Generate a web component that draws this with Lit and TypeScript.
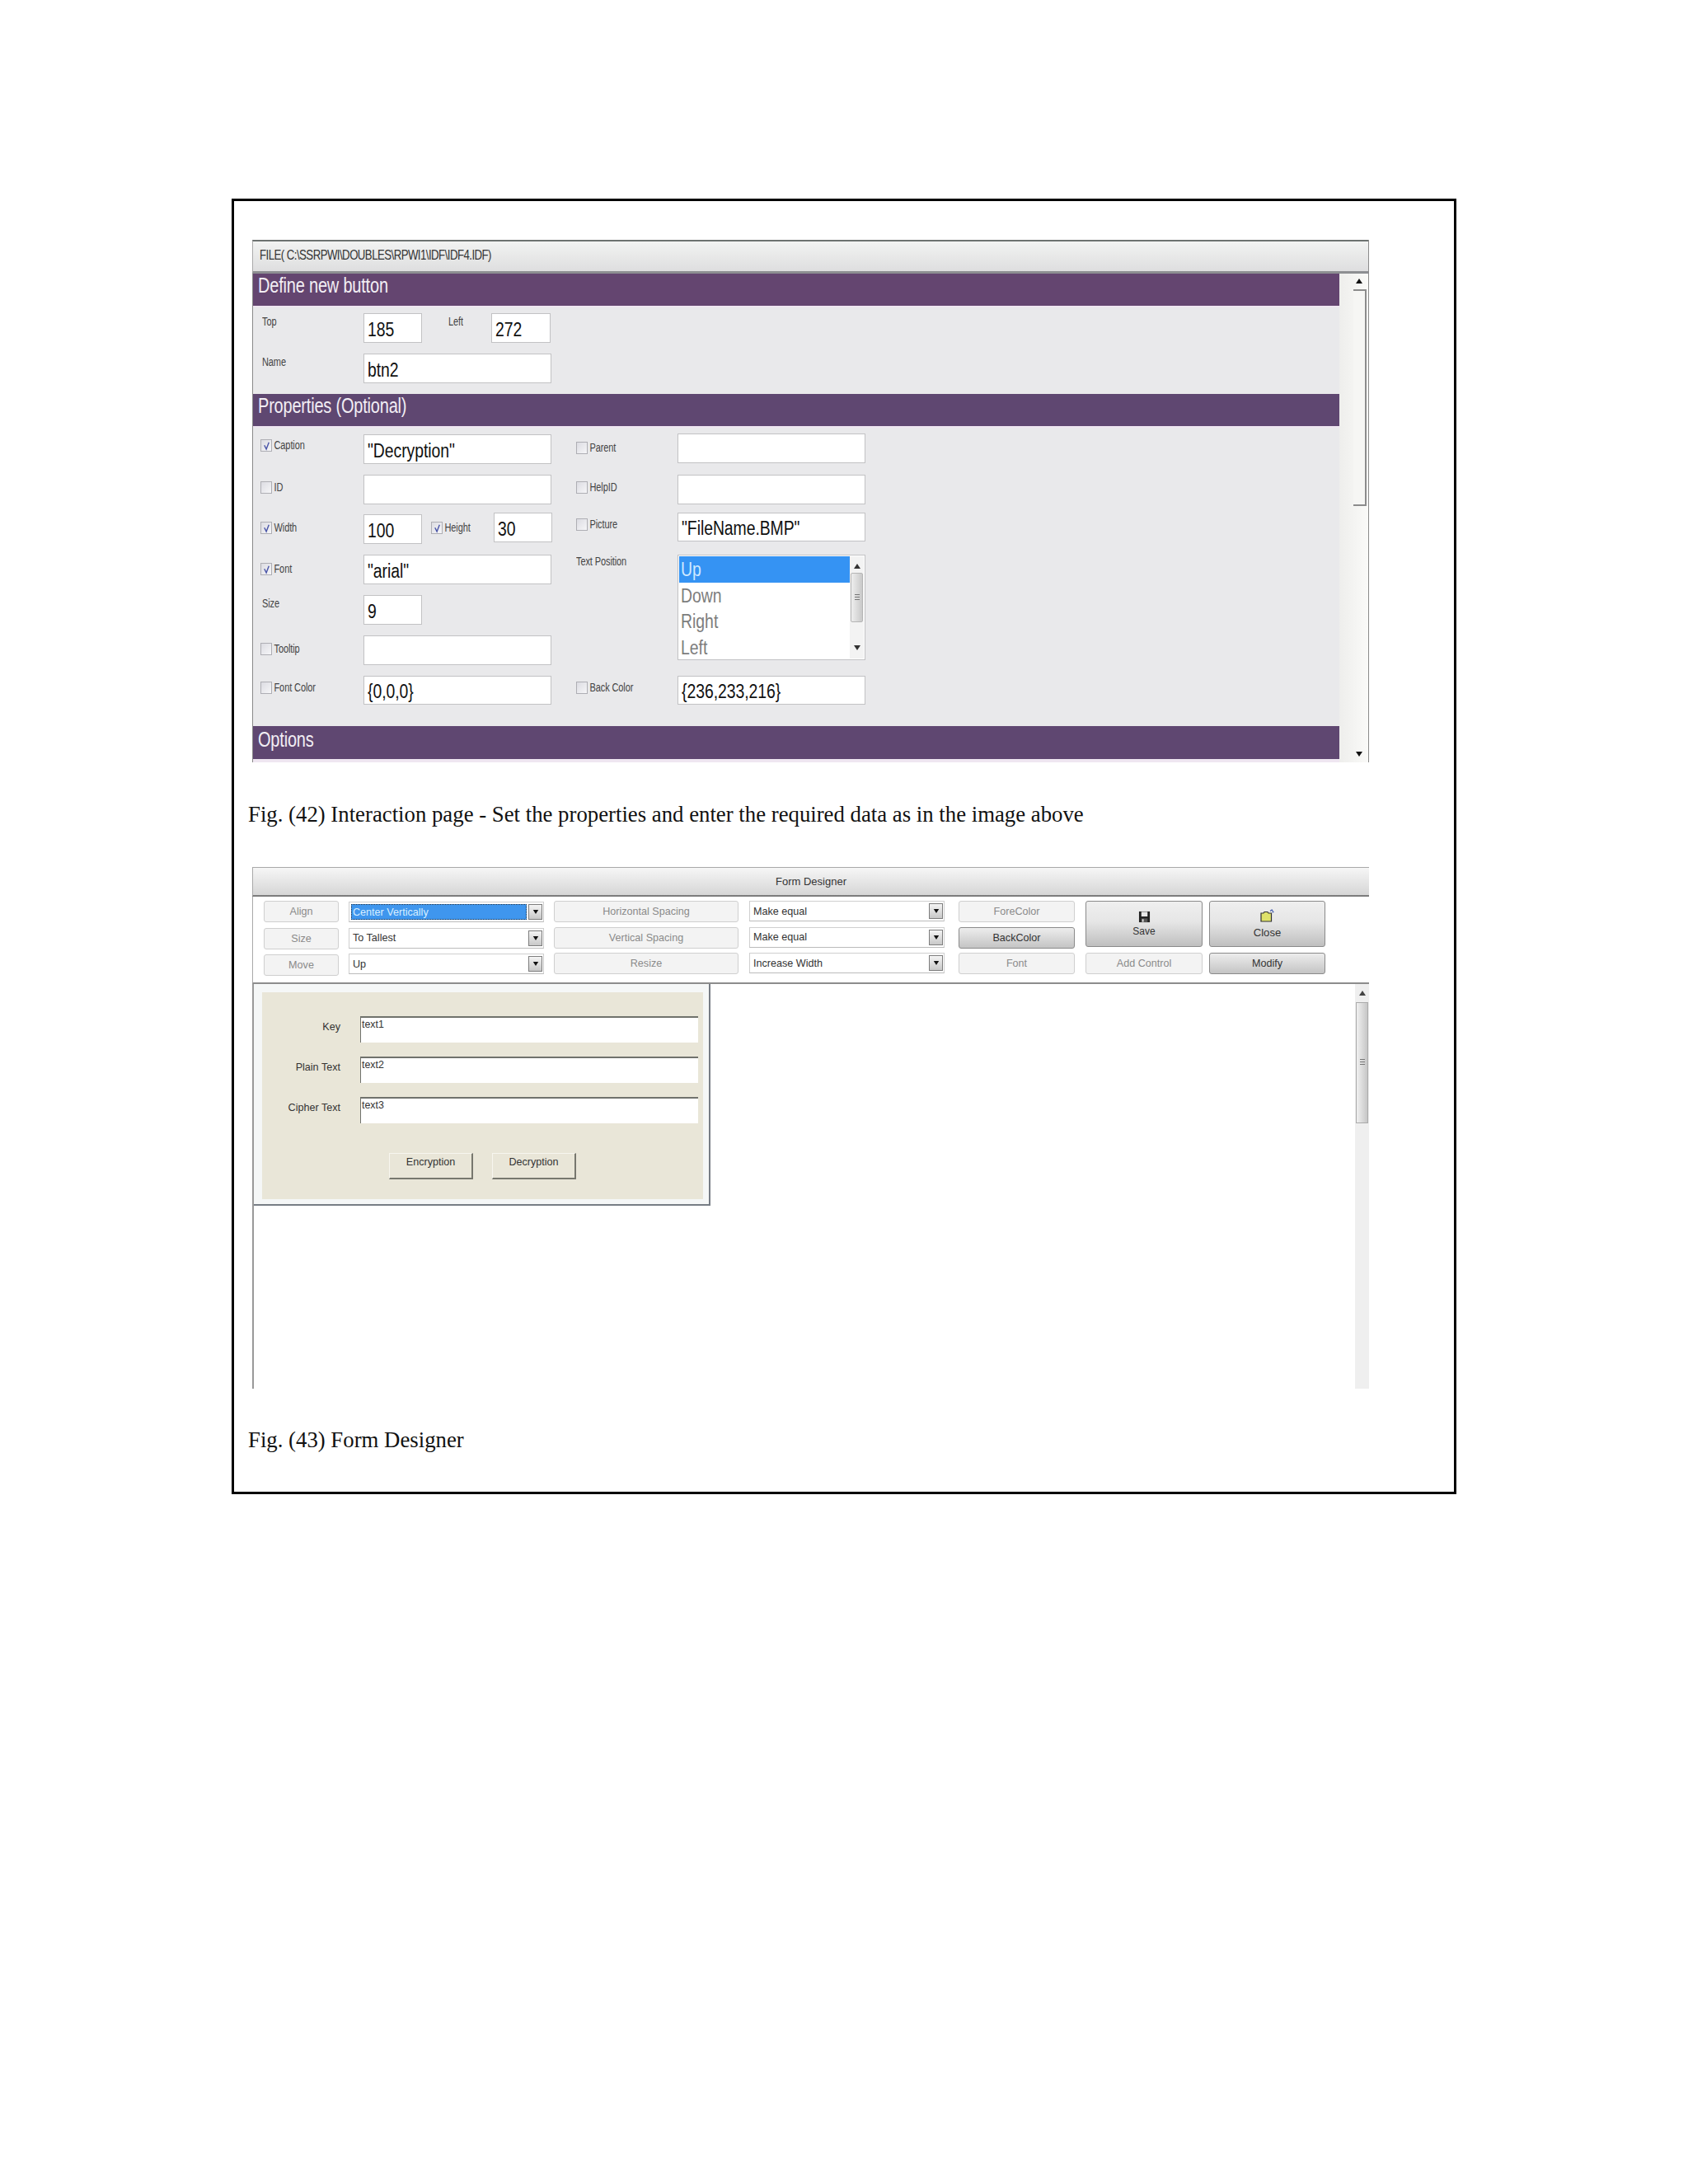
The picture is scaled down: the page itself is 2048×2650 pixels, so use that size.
import { LitElement, html, css, svg } from "lit";
import { customElement } from "lit/decorators.js";

const up = (c = "#111") => html`<svg class="arr" viewBox="0 0 10 8" width="10" height="8"><path d="M5 1 L9 7 H1 Z" fill=${c}></path></svg>`;
const down = (c = "#111") => html`<svg class="arr" viewBox="0 0 10 8" width="10" height="8"><path d="M1 1 H9 L5 7 Z" fill=${c}></path></svg>`;

const check = (on: boolean, mt: number) => html`<span class="chk" style="margin-top:${mt}px">${on
  ? html`<svg viewBox="0 0 14 15" width="11" height="12"><path d="M3.5 6.5 L6.5 12.5 L10.5 2" fill="none" stroke="#4a55a8" stroke-width="1.8"></path></svg>`
  : ""}</span>`;

const lab = (t: string, mt = 0) => html`<span class="lab" style="margin-top:${mt}px">${t}</span>`;
const field = (t: string, w: number, h: number, mt = 0) =>
  html`<div class="inp" style="width:${w}px;height:${h}px;margin-top:${mt}px"><span class="big">${t}</span></div>`;
const chkLabel = (on: boolean, t: string, mt: number) =>
  html`<div class="cl">${check(on, mt)}${lab(t, mt)}</div>`;

const combo = (t: string, cls = "", h = 25, sel = false) => html`<div class="combo ${cls}" style="height:${h}px">
  <span class="ctext ${sel ? "sel" : ""}">${t}</span><span class="drop">${down("#111")}</span></div>`;
const btn = (t: string, on = false, h = 26) => html`<div class="btn ${on ? "on" : ""}" style="height:${h}px">${t}</div>`;

const floppy = svg`<svg viewBox="0 0 16 16" width="15" height="15"><path d="M1 1 H15 V15 H1 Z" fill="#222"></path><rect x="4" y="1.5" width="8" height="6" fill="#e8e8e8"></rect><rect x="4" y="10" width="8" height="5" fill="#555"></rect><rect x="5" y="11" width="2" height="3.5" fill="#ddd"></rect></svg>`;
const folder = svg`<svg viewBox="0 0 17 16" width="17" height="16"><path d="M1 5 H4 L5 3.5 H9 L10 5 H13.5 V15 H1 Z" fill="#dfe26a" stroke="#333" stroke-width="1.2"></path><path d="M12 2.5 L14 1 M14.5 4 L16.5 3.5 M14 0.5 L15.5 3" stroke="#3a55a8" stroke-width="1.1" fill="none"></path></svg>`;

@customElement("app-root")
export class AppRoot extends LitElement {
  static styles = css`
    :host { display: block; width: 2048px; height: 2650px; background: #fff; font-family: "Liberation Sans", Arial, sans-serif; overflow: hidden; }
    .page { padding: 241px 0 0 281px; }
    .frame { box-sizing: border-box; width: 1486px; height: 1572px; border: 3px solid #000; padding: 47px 0 0 17px; }
    .cap { font-family: "Liberation Serif", "Times New Roman", serif; font-size: 26.77px; line-height: 30px; color: #111; white-space: nowrap; }
    .cap1 { margin: 48px 0 49px; }
    .cap2 { margin: 47px 0 0; }

    .panel { margin-left: 5px; width: 1355px; height: 634px; display: flex; flex-direction: column; box-sizing: border-box; border-right: 1.5px solid #8b8b8b; overflow: hidden; }
    .title { box-sizing: border-box; height: 41px; flex: none; border-top: 2px solid #6d7270; border-bottom: 3px solid #8d8f92; border-left: 1px solid #aaa; background: linear-gradient(#f2f3f2, #dededf); font-size: 13.2px; color: #333; display: flex; align-items: center; padding: 0 0 3px 8px; }
    .title span { display: inline-block; transform: scaleY(1.25); letter-spacing: -0.52px; }
    .pbody { flex: 1; display: flex; min-height: 0; }
    .main { width: 1319px; background: #e9e9eb; border-left: 1.5px solid #8a8a8a; box-sizing: border-box; height: 593px; }
    .head { box-sizing: border-box; height: 41px; background: #644570; border-bottom: 2px solid #efe6f1; color: #f2eef4; font-size: 20px; display: flex; align-items: center; padding: 0 0 10px 6px; letter-spacing: -0.2px; }
    .head.alt { background: #5f4771; }
    .head.last { height: 40px; border-bottom: none; padding-bottom: 8px; }
    .head span { display: inline-block; transform: scaleY(1.3); }
    .sec1 { height: 105px; padding: 7px 0 0 9px; box-sizing: border-box; }
    .sec2 { height: 362px; padding: 7px 0 0 9px; box-sizing: border-box; display: grid; grid-template-columns: 125px 228px 30px 123px 228px; grid-template-rows: 50px 46px 51px 49px 49px 49px 36px; }
    .r { display: flex; align-items: flex-start; }
    .r1 { height: 49px; }
    .lab { font-size: 11px; color: #444; display: inline-block; transform: scaleY(1.35); white-space: nowrap; letter-spacing: -0.1px; line-height: 15px; }
    .cl { display: flex; align-items: flex-start; gap: 2.5px; }
    .chk { flex: none; box-sizing: border-box; width: 14px; height: 15px; border: 1.5px solid #aeaeb4; background: linear-gradient(135deg, #dcdce2, #f6f6f8); display: inline-flex; align-items: center; justify-content: center; }
    .inp { box-sizing: border-box; background: #fff; border: 1.5px solid #c2c2c4; flex: none; display: flex; align-items: center; padding: 2px 0 0 4px; overflow: hidden; }
    .big { display: inline-block; font-size: 19.4px; color: #111; transform: scaleY(1.28); white-space: nowrap; letter-spacing: -0.05px; }
    .listbox { grid-column: 5; grid-row: 4 / span 3; box-sizing: border-box; width: 228px; height: 128px; background: #fff; border: 1.5px solid #c2c2c4; display: flex; padding: 1px; }
    .items { width: 207px; flex: none; }
    .item { height: 31.6px; display: flex; align-items: center; padding-left: 2px; font-size: 19.4px; color: #7d7d7d; }
    .item span { display: inline-block; transform: scaleY(1.25); }
    .item.sel { background: #3593f3; color: #cfe9ff; }
    .lsb { flex: 1; background: #f3f3f3; display: flex; flex-direction: column; align-items: center; padding-top: 8px; box-sizing: border-box; }
    .lthumb { box-sizing: border-box; width: 15px; height: 60px; margin-top: 4px; border: 1px solid #b5b5b5; border-radius: 2px; background: linear-gradient(90deg, #eee, #c9c9c9); display: flex; align-items: center; justify-content: center; color: #777; font-size: 9px; }
    .grip { width: 6px; height: 9px; background: repeating-linear-gradient(#777 0 1px, transparent 1px 3px); }
    .lspace { flex: 1; }
    .arr { display: block; flex: none; }
    .pad { background: #efe6f1; height: 4px; }

    .vsb { width: 35px; background: linear-gradient(90deg, #eeeeec, #fafaf8); display: flex; flex-direction: column; align-items: flex-end; box-sizing: border-box; padding: 5px 2px 6px 0; height: 593px; }
    .vsb .arr { margin-right: 4px; }
    .vthumb { box-sizing: border-box; width: 16px; height: 263px; margin-top: 6px; border-top: 2px solid #8c8c8c; border-bottom: 2px solid #8c8c8c; border-right: 2px solid #8c8c8c; background: #f6f6f4; flex: none; }

    .win { margin-left: 5px; width: 1355px; height: 633px; display: flex; flex-direction: column; box-sizing: border-box; overflow: hidden; }
    .wtitle { box-sizing: border-box; height: 36px; flex: none; border-top: 1.5px solid #a9a9a9; border-bottom: 2.5px solid #7c7c7c; border-left: 1.5px solid #a9a9a9; background: linear-gradient(#f6f6f6, #d6d6d6); display: flex; align-items: center; justify-content: center; font-size: 13px; color: #333; }
    .tools { box-sizing: border-box; height: 106px; flex: none; padding-top: 5px; padding-left: 13px; border-left: 1.5px solid #a9a9a9; border-bottom: 2.5px solid #8d8d8d; display: flex; background: #fff; }
    .col { display: flex; flex-direction: column; flex: none; }
    .c1 { width: 91px; margin-right: 12px; gap: 6.5px; }
    .c2 { width: 237px; margin-right: 12px; gap: 6.5px; padding-top: 1px; }
    .c3 { width: 224px; margin-right: 13px; gap: 5.5px; }
    .c4 { width: 237px; margin-right: 17px; gap: 6.5px; }
    .c5 { width: 141px; margin-right: 13px; gap: 5.5px; }
    .c6 { width: 142px; margin-right: 8px; gap: 7px; }
    .c7 { width: 141px; gap: 7px; }
    .btn { box-sizing: border-box; border: 1.5px solid #cfcfcf; border-radius: 3px; background: #f3f3f3; color: #8a8a8a; font-size: 12.6px; display: flex; align-items: center; justify-content: center; flex: none; }
    .btn.on { border-color: #8a8a8a; background: linear-gradient(#ededed, #c4c4c4); color: #333; }
    .big-btn { box-sizing: border-box; height: 56px; border: 1.5px solid #8a8a8a; border-radius: 3px; background: linear-gradient(#efefef, #e6e6e6 45%, #bfbfbf); color: #333; display: flex; flex-direction: column; align-items: center; flex: none; line-height: 15px; }
    .save { font-size: 12px; padding-top: 10.5px; gap: 3px; }
    .close { font-size: 13.1px; padding-top: 8.5px; gap: 5px; }
    .combo { box-sizing: border-box; border: 1px solid #cfcfcf; border-bottom: 1.5px solid #bbb; background: #fff; display: flex; align-items: stretch; font-size: 12.6px; color: #333; flex: none; padding: 2px 1px 2px 2px; }
    .ctext { flex: 1; display: flex; align-items: center; padding-left: 2px; }
    .ctext.sel { background: #3f96ee; outline: 1px dotted #234; outline-offset: -1px; color: #d8efff; }
    .drop { width: 17px; margin-left: 2px; box-sizing: border-box; border: 1px solid #7d7d7d; background: linear-gradient(#f4f4f4, #c8c8c8); display: flex; align-items: center; justify-content: center; flex: none; }
    .drop .arr { width: 8px; height: 7px; }

    .canvas { flex: 1; display: flex; border-left: 2px solid #999; background: #fff; min-height: 0; }
    .area { flex: 1; }
    .dbox { box-sizing: border-box; width: 554px; height: 269px; border-right: 2.5px solid #777d85; border-bottom: 2.5px solid #777d85; background: #f5f7f7; padding: 10px 7px 6px 10px; }
    .beige { background: #e9e6d8; height: 100%; padding-top: 29px; box-sizing: border-box; }
    .frow { display: flex; height: 32px; margin-bottom: 17px; }
    .flab { width: 95px; text-align: right; font-size: 12.6px; color: #333; line-height: 26px; flex: none; }
    .finp { margin-left: 24px; width: 410px; box-sizing: border-box; background: #fff; border-top: 2px solid #70726c; border-left: 1.5px solid #70726c; font-size: 12.4px; color: #333; padding-left: 1px; line-height: 17px; }
    .fbtns { display: flex; gap: 23px; margin-left: 154px; margin-top: 36px; }
    .fbtn { box-sizing: border-box; width: 102px; height: 32px; border-right: 2px solid #77776e; border-bottom: 2px solid #77776e; border-top: 1px solid #f7f6ef; border-left: 1px solid #f7f6ef; font-size: 12.6px; color: #333; text-align: center; line-height: 20px; }
    .wsb { width: 17px; background: #efefef; display: flex; flex-direction: column; align-items: center; padding-top: 7px; box-sizing: border-box; }
    .wthumb { box-sizing: border-box; width: 15px; height: 147px; margin-top: 7px; border: 1px solid #aaa; background: linear-gradient(90deg, #f0f0f0, #c6c6c6); display: flex; align-items: center; justify-content: center; }
  `;

  render() {
    return html`<div class="page"><div class="frame">
      <div class="panel">
        <div class="title"><span>FILE( C:\\SSRPWI\\DOUBLES\\RPWI1\\IDF\\IDF4.IDF)</span></div>
        <div class="pbody">
          <div class="main">
            <div class="head"><span>Define new button</span></div>
            <div class="sec1">
              <div class="r r1">
                <div style="width:125px;padding-left:2px;box-sizing:border-box">${lab("Top", 0)}</div>
                ${field("185", 71, 36)}
                <div style="width:84px;padding-left:32px;box-sizing:border-box">${lab("Left", 0)}</div>
                ${field("272", 72, 36)}
              </div>
              <div class="r">
                <div style="width:125px;padding-left:2px;box-sizing:border-box">${lab("Name", 0)}</div>
                ${field("btn2", 228, 36)}
              </div>
            </div>
            <div class="head alt"><span>Properties (Optional)</span></div>
            <div class="sec2">
              ${chkLabel(true, "Caption", 7)}${field('"Decryption"', 228, 36, 1)}<span></span>${chkLabel(false, "Parent", 10)}${field("", 228, 36)}
              ${chkLabel(false, "ID", 8)}${field("", 228, 36)}<span></span>${chkLabel(false, "HelpID", 8)}${field("", 228, 36)}
              ${chkLabel(true, "Width", 11)}
              <div class="r" style="width:229px">
                ${field("100", 71, 36, 2)}
                <span style="width:11px"></span>${check(true, 11)}<span style="width:2.5px"></span>${lab("Height", 11)}
                <span style="flex:1"></span>${field("30", 71, 36)}
              </div>
              <span></span>${chkLabel(false, "Picture", 7)}${field('"FileName.BMP"', 228, 35)}
              ${chkLabel(true, "Font", 10)}${field('"arial"', 228, 36)}<span></span>${lab("Text Position", 6)}
              <div class="listbox">
                <div class="items">
                  <div class="item sel"><span>Up</span></div>
                  <div class="item"><span>Down</span></div>
                  <div class="item"><span>Right</span></div>
                  <div class="item"><span>Left</span></div>
                </div>
                <div class="lsb">${up("#333")}<div class="lthumb"><span class="grip"></span></div><span class="lspace"></span><span style="margin-bottom:9px">${down("#333")}</span></div>
              </div>
              <div style="grid-column:1;grid-row:5;padding-left:2px">${lab("Size", 1)}</div>
              <div style="grid-column:2;grid-row:5">${field("9", 71, 36)}</div>
              <div style="grid-column:1;grid-row:6">${chkLabel(false, "Tooltip", 9)}</div>
              <div style="grid-column:2;grid-row:6">${field("", 228, 36)}</div>
              <div style="grid-column:1;grid-row:7">${chkLabel(false, "Font Color", 7)}</div>
              <div style="grid-column:2;grid-row:7">${field("{0,0,0}", 228, 35)}</div>
              <div style="grid-column:4;grid-row:7">${chkLabel(false, "Back Color", 7)}</div>
              <div style="grid-column:5;grid-row:7">${field("{236,233,216}", 228, 35)}</div>
            </div>
            <div class="head alt last"><span>Options</span></div>
            <div class="pad"></div>
          </div>
          <div class="vsb">
            ${up()}
            <div class="vthumb"></div>
            <span style="flex:1"></span>
            ${down()}
          </div>
        </div>
      </div>

      <div class="cap cap1">Fig. (42) Interaction page - Set the properties and enter the required data as in the image above</div>

      <div class="win">
        <div class="wtitle">Form Designer</div>
        <div class="tools">
          <div class="col c1">${btn("Align")}${btn("Size")}${btn("Move")}</div>
          <div class="col c2">${combo("Center Vertically", "", 25, true)}${combo("To Tallest")}${combo("Up")}</div>
          <div class="col c3">${btn("Horizontal Spacing")}${btn("Vertical Spacing")}${btn("Resize")}</div>
          <div class="col c4">${combo("Make equal")}${combo("Make equal")}${combo("Increase Width")}</div>
          <div class="col c5">${btn("ForeColor")}${btn("BackColor", true)}${btn("Font")}</div>
          <div class="col c6"><div class="big-btn save">${floppy}<span>Save</span></div>${btn("Add Control")}</div>
          <div class="col c7"><div class="big-btn close">${folder}<span>Close</span></div>${btn("Modify", true)}</div>
        </div>
        <div class="canvas">
          <div class="area">
            <div class="dbox"><div class="beige">
              <div class="frow"><span class="flab">Key</span><div class="finp">text1</div></div>
              <div class="frow"><span class="flab">Plain Text</span><div class="finp">text2</div></div>
              <div class="frow"><span class="flab">Cipher Text</span><div class="finp">text3</div></div>
              <div class="fbtns"><div class="fbtn">Encryption</div><div class="fbtn">Decryption</div></div>
            </div></div>
          </div>
          <div class="wsb">${up("#444")}<div class="wthumb"><span class="grip"></span></div></div>
        </div>
      </div>

      <div class="cap cap2">Fig. (43) Form Designer</div>
    </div></div>`;
  }
}
